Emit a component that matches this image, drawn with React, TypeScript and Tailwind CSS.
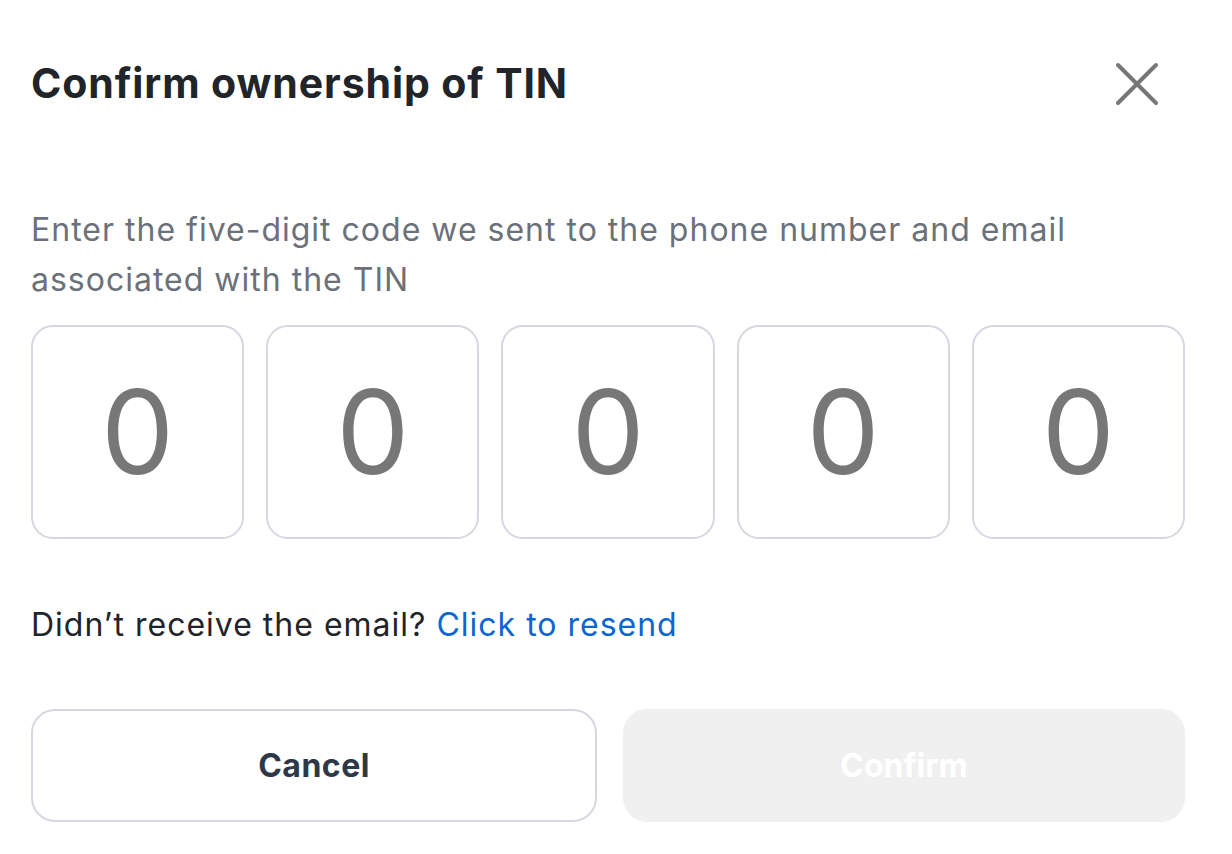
import { useState } from 'react';

export default function App() {
    const [digits] = useState(['0', '0', '0', '0', '0']);

    return (
        <div className="min-h-[854px] w-[1232px] bg-white font-['Inter',sans-serif]">
            <div className="w-[1154px] ml-[31px] pt-[52px]">
                <div className="flex items-center justify-between h-[64px]">
                    <h1 className="text-[41px] font-bold text-[#212429] tracking-[0.9px]">Confirm ownership of TIN</h1>
                    <button className="mr-[26px] text-[#777777]" aria-label="Close">
                        <svg width="44" height="44" viewBox="0 0 44 44" fill="none" stroke="currentColor" strokeWidth="4" strokeLinecap="round">
                            <path d="M3 3L41 41M41 3L3 41" />
                        </svg>
                    </button>
                </div>

                <p className="mt-[89px] text-[32px] leading-[50px] text-[#6b717a] tracking-[1px]">
                    Enter the five-digit code we sent to the phone number and email associated with the TIN
                </p>

                <div className="mt-[20px] flex gap-[22px]">
                    {digits.map((d, i) => (
                        <div
                            key={i}
                            className="w-[214px] h-[214px] rounded-[22px] border-2 border-[#d5d8e1] flex items-center justify-center"
                        >
                            <span className="text-[116px] leading-none text-[#777777]">{d}</span>
                        </div>
                    ))}
                </div>

                <p className="mt-[62px] text-[32px] leading-[48px] text-[#212429] tracking-[1px]">
                    Didn’t receive the email? <a href="#" className="text-[#0a66d2]">Click to resend</a>
                </p>

                <div className="mt-[60px] flex gap-[26px]">
                    <button className="flex-1 h-[113px] rounded-[24px] border-2 border-[#d5d8e1] text-[32px] font-bold text-[#2e3748] tracking-[0.5px]">
                        Cancel
                    </button>
                    <button className="flex-1 h-[113px] rounded-[24px] bg-[#f0f0f0] text-[32px] font-bold text-white" disabled>
                        Confirm
                    </button>
                </div>
            </div>
        </div>
    );
}
